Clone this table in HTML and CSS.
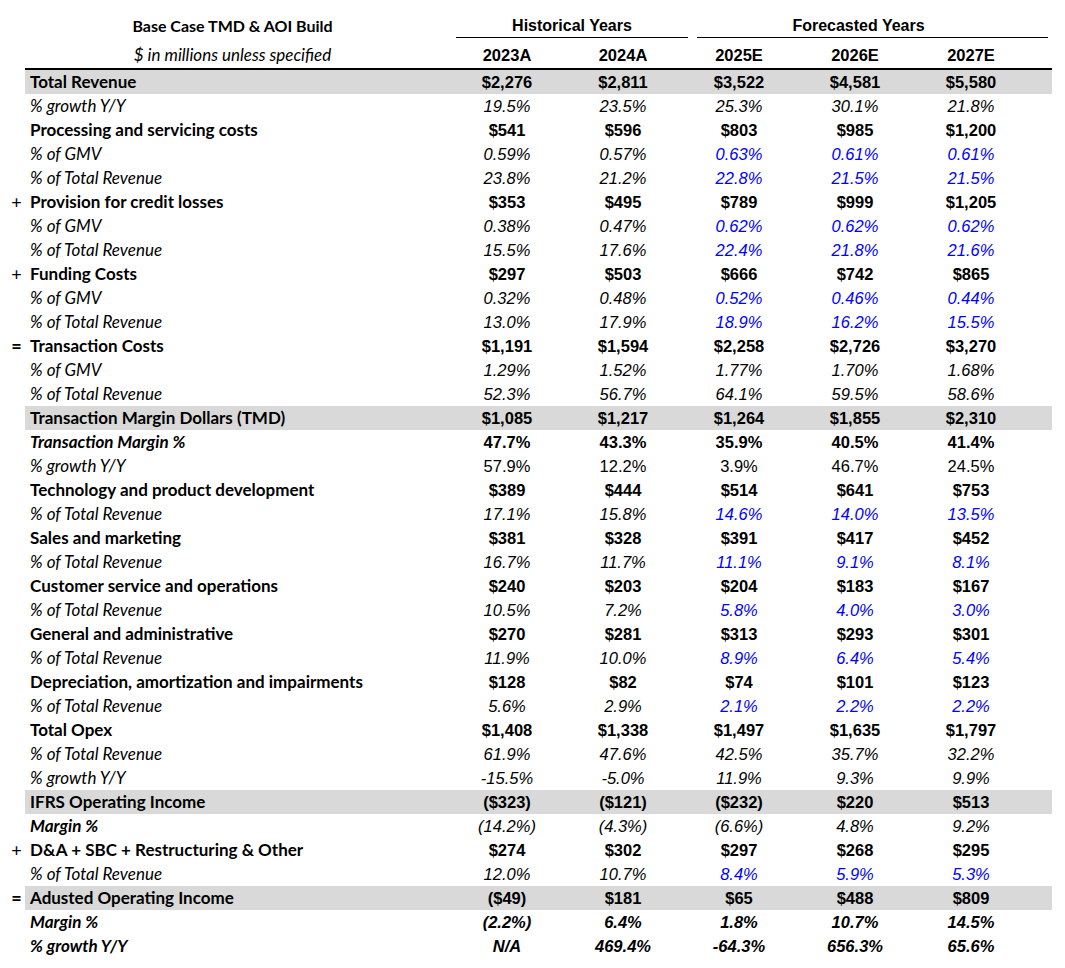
FILE: index.html
```html
<!DOCTYPE html>
<html>
<head>
<meta charset="utf-8">
<link rel="stylesheet" href="styles.css">
</head>
<body>
<div class="sheet">
  <div class="hdr1">
    <div class="title">Base Case TMD &amp; AOI Build</div>
    <div class="hist">Historical Years</div>
    <div class="fore">Forecasted Years</div>
  </div>
  <div class="hdr2">
    <div class="subtitle">$ in millions unless specified</div>
    <div class="yr">2023A</div><div class="yr">2024A</div><div class="yr">2025E</div><div class="yr">2026E</div><div class="yr">2027E</div>
  </div>

  <div class="row first"><span class="sign"></span><div class="band gray b"><span class="lbl">Total Revenue</span><span class="n">$2,276</span><span class="n">$2,811</span><span class="n">$3,522</span><span class="n">$4,581</span><span class="n">$5,580</span></div></div>
  <div class="row"><span class="sign"></span><div class="band i"><span class="lbl">% growth Y/Y</span><span class="n">19.5%</span><span class="n">23.5%</span><span class="n">25.3%</span><span class="n">30.1%</span><span class="n">21.8%</span></div></div>
  <div class="row"><span class="sign"></span><div class="band b"><span class="lbl">Processing and servicing costs</span><span class="n">$541</span><span class="n">$596</span><span class="n">$803</span><span class="n">$985</span><span class="n">$1,200</span></div></div>
  <div class="row"><span class="sign"></span><div class="band i"><span class="lbl">% of GMV</span><span class="n">0.59%</span><span class="n">0.57%</span><span class="n blue">0.63%</span><span class="n blue">0.61%</span><span class="n blue">0.61%</span></div></div>
  <div class="row"><span class="sign"></span><div class="band i"><span class="lbl">% of Total Revenue</span><span class="n">23.8%</span><span class="n">21.2%</span><span class="n blue">22.8%</span><span class="n blue">21.5%</span><span class="n blue">21.5%</span></div></div>
  <div class="row"><span class="sign">+</span><div class="band b"><span class="lbl">Provision for credit losses</span><span class="n">$353</span><span class="n">$495</span><span class="n">$789</span><span class="n">$999</span><span class="n">$1,205</span></div></div>
  <div class="row"><span class="sign"></span><div class="band i"><span class="lbl">% of GMV</span><span class="n">0.38%</span><span class="n">0.47%</span><span class="n blue">0.62%</span><span class="n blue">0.62%</span><span class="n blue">0.62%</span></div></div>
  <div class="row"><span class="sign"></span><div class="band i"><span class="lbl">% of Total Revenue</span><span class="n">15.5%</span><span class="n">17.6%</span><span class="n blue">22.4%</span><span class="n blue">21.8%</span><span class="n blue">21.6%</span></div></div>
  <div class="row"><span class="sign">+</span><div class="band b"><span class="lbl">Funding Costs</span><span class="n">$297</span><span class="n">$503</span><span class="n">$666</span><span class="n">$742</span><span class="n">$865</span></div></div>
  <div class="row"><span class="sign"></span><div class="band i"><span class="lbl">% of GMV</span><span class="n">0.32%</span><span class="n">0.48%</span><span class="n blue">0.52%</span><span class="n blue">0.46%</span><span class="n blue">0.44%</span></div></div>
  <div class="row"><span class="sign"></span><div class="band i"><span class="lbl">% of Total Revenue</span><span class="n">13.0%</span><span class="n">17.9%</span><span class="n blue">18.9%</span><span class="n blue">16.2%</span><span class="n blue">15.5%</span></div></div>
  <div class="row"><span class="sign eq">=</span><div class="band b"><span class="lbl">Transaction Costs</span><span class="n">$1,191</span><span class="n">$1,594</span><span class="n">$2,258</span><span class="n">$2,726</span><span class="n">$3,270</span></div></div>
  <div class="row"><span class="sign"></span><div class="band i"><span class="lbl">% of GMV</span><span class="n">1.29%</span><span class="n">1.52%</span><span class="n">1.77%</span><span class="n">1.70%</span><span class="n">1.68%</span></div></div>
  <div class="row"><span class="sign"></span><div class="band i"><span class="lbl">% of Total Revenue</span><span class="n">52.3%</span><span class="n">56.7%</span><span class="n">64.1%</span><span class="n">59.5%</span><span class="n">58.6%</span></div></div>
  <div class="row"><span class="sign"></span><div class="band gray b"><span class="lbl">Transaction Margin Dollars (TMD)</span><span class="n">$1,085</span><span class="n">$1,217</span><span class="n">$1,264</span><span class="n">$1,855</span><span class="n">$2,310</span></div></div>
  <div class="row"><span class="sign"></span><div class="band b"><span class="lbl i">Transaction Margin %</span><span class="n">47.7%</span><span class="n">43.3%</span><span class="n">35.9%</span><span class="n">40.5%</span><span class="n">41.4%</span></div></div>
  <div class="row"><span class="sign"></span><div class="band"><span class="lbl i">% growth Y/Y</span><span class="n">57.9%</span><span class="n">12.2%</span><span class="n">3.9%</span><span class="n">46.7%</span><span class="n">24.5%</span></div></div>
  <div class="row"><span class="sign"></span><div class="band b"><span class="lbl">Technology and product development</span><span class="n">$389</span><span class="n">$444</span><span class="n">$514</span><span class="n">$641</span><span class="n">$753</span></div></div>
  <div class="row"><span class="sign"></span><div class="band i"><span class="lbl">% of Total Revenue</span><span class="n">17.1%</span><span class="n">15.8%</span><span class="n blue">14.6%</span><span class="n blue">14.0%</span><span class="n blue">13.5%</span></div></div>
  <div class="row"><span class="sign"></span><div class="band b"><span class="lbl">Sales and marketing</span><span class="n">$381</span><span class="n">$328</span><span class="n">$391</span><span class="n">$417</span><span class="n">$452</span></div></div>
  <div class="row"><span class="sign"></span><div class="band i"><span class="lbl">% of Total Revenue</span><span class="n">16.7%</span><span class="n">11.7%</span><span class="n blue">11.1%</span><span class="n blue">9.1%</span><span class="n blue">8.1%</span></div></div>
  <div class="row"><span class="sign"></span><div class="band b"><span class="lbl">Customer service and operations</span><span class="n">$240</span><span class="n">$203</span><span class="n">$204</span><span class="n">$183</span><span class="n">$167</span></div></div>
  <div class="row"><span class="sign"></span><div class="band i"><span class="lbl">% of Total Revenue</span><span class="n">10.5%</span><span class="n">7.2%</span><span class="n blue">5.8%</span><span class="n blue">4.0%</span><span class="n blue">3.0%</span></div></div>
  <div class="row"><span class="sign"></span><div class="band b"><span class="lbl">General and administrative</span><span class="n">$270</span><span class="n">$281</span><span class="n">$313</span><span class="n">$293</span><span class="n">$301</span></div></div>
  <div class="row"><span class="sign"></span><div class="band i"><span class="lbl">% of Total Revenue</span><span class="n">11.9%</span><span class="n">10.0%</span><span class="n blue">8.9%</span><span class="n blue">6.4%</span><span class="n blue">5.4%</span></div></div>
  <div class="row"><span class="sign"></span><div class="band b"><span class="lbl">Depreciation, amortization and impairments</span><span class="n">$128</span><span class="n">$82</span><span class="n">$74</span><span class="n">$101</span><span class="n">$123</span></div></div>
  <div class="row"><span class="sign"></span><div class="band i"><span class="lbl">% of Total Revenue</span><span class="n">5.6%</span><span class="n">2.9%</span><span class="n blue">2.1%</span><span class="n blue">2.2%</span><span class="n blue">2.2%</span></div></div>
  <div class="row"><span class="sign"></span><div class="band b"><span class="lbl">Total Opex</span><span class="n">$1,408</span><span class="n">$1,338</span><span class="n">$1,497</span><span class="n">$1,635</span><span class="n">$1,797</span></div></div>
  <div class="row"><span class="sign"></span><div class="band i"><span class="lbl">% of Total Revenue</span><span class="n">61.9%</span><span class="n">47.6%</span><span class="n">42.5%</span><span class="n">35.7%</span><span class="n">32.2%</span></div></div>
  <div class="row"><span class="sign"></span><div class="band i"><span class="lbl">% growth Y/Y</span><span class="n">-15.5%</span><span class="n">-5.0%</span><span class="n">11.9%</span><span class="n">9.3%</span><span class="n">9.9%</span></div></div>
  <div class="row"><span class="sign"></span><div class="band gray b"><span class="lbl">IFRS Operating Income</span><span class="n">($323)</span><span class="n">($121)</span><span class="n">($232)</span><span class="n">$220</span><span class="n">$513</span></div></div>
  <div class="row"><span class="sign"></span><div class="band i"><span class="lbl b">Margin %</span><span class="n">(14.2%)</span><span class="n">(4.3%)</span><span class="n">(6.6%)</span><span class="n">4.8%</span><span class="n">9.2%</span></div></div>
  <div class="row"><span class="sign">+</span><div class="band b"><span class="lbl">D&amp;A + SBC + Restructuring &amp; Other</span><span class="n">$274</span><span class="n">$302</span><span class="n">$297</span><span class="n">$268</span><span class="n">$295</span></div></div>
  <div class="row"><span class="sign"></span><div class="band i"><span class="lbl">% of Total Revenue</span><span class="n">12.0%</span><span class="n">10.7%</span><span class="n blue">8.4%</span><span class="n blue">5.9%</span><span class="n blue">5.3%</span></div></div>
  <div class="row"><span class="sign eq">=</span><div class="band gray b"><span class="lbl">Adusted Operating Income</span><span class="n">($49)</span><span class="n">$181</span><span class="n">$65</span><span class="n">$488</span><span class="n">$809</span></div></div>
  <div class="row"><span class="sign"></span><div class="band b i"><span class="lbl">Margin %</span><span class="n">(2.2%)</span><span class="n">6.4%</span><span class="n">1.8%</span><span class="n">10.7%</span><span class="n">14.5%</span></div></div>
  <div class="row"><span class="sign"></span><div class="band b i"><span class="lbl">% growth Y/Y</span><span class="n">N/A</span><span class="n">469.4%</span><span class="n">-64.3%</span><span class="n">656.3%</span><span class="n">65.6%</span></div></div>
</div>
</body>
</html>
```

FILE: styles.css
```css
html, body {
  margin: 0;
  padding: 0;
  background: #ffffff;
  color: #000000;
}
.sheet {
  padding-left: 8px;
  width: 1044px;
  font-family: "Lato", "Liberation Sans", sans-serif;
  font-size: 17px;
}
.hdr1 {
  display: flex;
  align-items: flex-end;
  height: 38px;
  font-weight: 700;
  font-size: 16px;
}
.title {
  width: 433px;
  padding-left: 8px;
  text-align: center;
  line-height: 23px;
  padding-bottom: 1px;
}
.hist, .fore {
  border-bottom: 1px solid #000;
  line-height: 23px;
  text-align: center;
  font-family: "Liberation Sans", Arial, sans-serif;
}
.hist {
  margin-left: 7px;
  width: 232px;
}
.fore {
  margin-left: 9px;
  width: 323px;
  padding-right: 28px;
}
.hdr2 {
  display: grid;
  grid-template-columns: 441px repeat(5, 116px);
  height: 30px;
  padding-top: 5px;
  box-sizing: border-box;
  line-height: 24px;
}
.subtitle {
  font-style: italic;
  text-align: center;
  padding-left: 8px;
}
.yr {
  font-family: "Liberation Sans", Arial, sans-serif;
  font-weight: 700;
  font-size: 16.5px;
  text-align: center;
}
.row {
  display: flex;
  height: 24px;
  line-height: 24px;
}
.row.first .band {
  border-top: 2px solid #000;
}
.row.first {
  height: 26px;
}
.sign {
  width: 17px;
  text-align: center;
  font-weight: 400;
  font-style: normal;
  font-size: 18px;
}
.sign.eq {
  font-weight: 700;
}
.band {
  flex: 1;
  display: grid;
  grid-template-columns: 424px repeat(5, 116px) 23px;
}
.band.gray {
  background: #d9d9d9;
}
.lbl {
  padding-left: 5px;
  white-space: nowrap;
}
.n {
  text-align: center;
  font-family: "Liberation Sans", Arial, sans-serif;
  font-size: 16.5px;
}
.b { font-weight: 700; }
.i { font-style: italic; }
.blue { color: #0000ff; }
```
